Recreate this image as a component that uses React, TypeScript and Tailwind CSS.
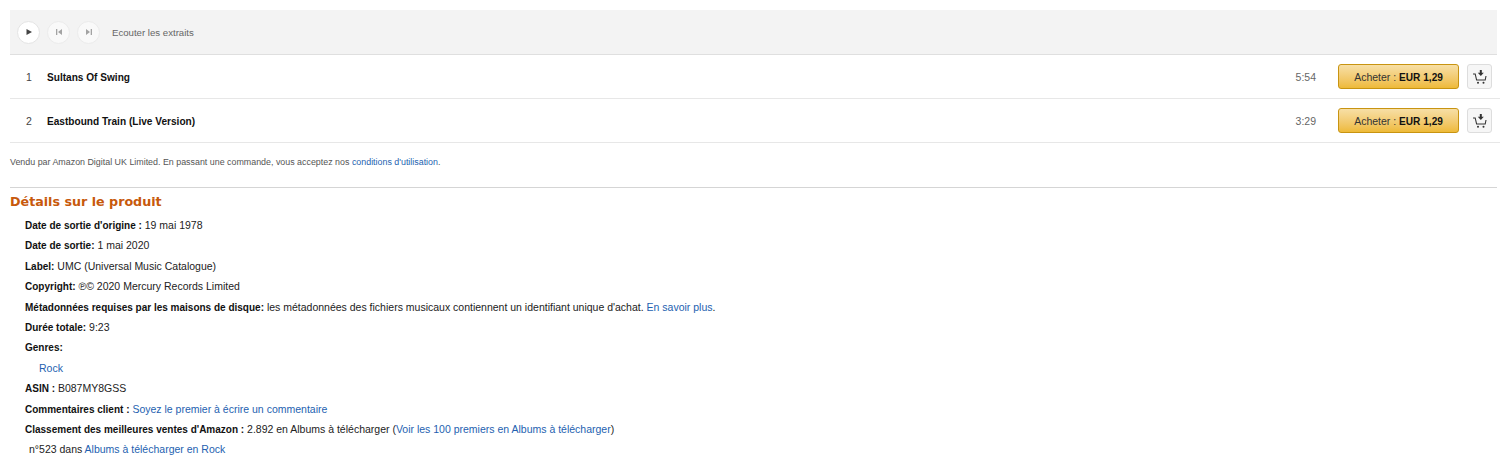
function Cart() {
  return (
    <svg width="16" height="16" viewBox="0 0 16 16" fill="none">
      <path d="M8.800 1v3" stroke="#333" strokeWidth="2" />
      <path d="M5.800 3.800h6L8.800 7z" fill="#333" />
      <path d="M1 5h2.200l1.400 6h8.600l.8-4" stroke="#333" strokeWidth="1.100" />
      <circle cx="6" cy="13.800" r="1" fill="#333" />
      <circle cx="11.500" cy="13.800" r="1" fill="#333" />
    </svg>
  );
}

function Round({ children, dim }: { children: React.ReactNode; dim?: boolean }) {
  return (
    <div className={`w-[23px] h-[23px] rounded-full bg-white border border-[#e4e4e4] flex items-center justify-center ${dim ? "opacity-50" : ""}`}>
      {children}
    </div>
  );
}

function Track({ n, title, time }: { n: string; title: string; time: string }) {
  return (
    <div className="h-11 flex items-center border-b border-[#e7e7e7]">
      <span className="w-[37px] pl-4 pt-[2px] text-[#444]">{n}</span>
      <span className="font-bold text-[#111] flex-1 pt-[2px] text-[10.100px]">{title}</span>
      <span className="text-[#666] pt-[2px] mr-[22px]">{time}</span>
      <button className="w-[121px] h-[25px] rounded-[3px] border border-[#c89411] bg-gradient-to-b from-[#f7dfa5] to-[#eeba37] pt-[2px] text-[#333] mr-2 text-[10.500px]">
        Acheter : <b className="text-[#111] text-[10.100px]">EUR 1,29</b>
      </button>
      <div className="w-[25px] h-[25px] rounded-[3px] border border-[#ddd] bg-[#f6f6f6] flex items-center justify-center mr-[8px]">
        <Cart />
      </div>
    </div>
  );
}

function Row({ children, className = "" }: { children: React.ReactNode; className?: string }) {
  return <div className={`h-[20.4px] leading-[20.4px] pl-[15px] whitespace-nowrap ${className}`}>{children}</div>;
}

const L = ({ children }: { children: React.ReactNode }) => <a className="text-[#245fb0]">{children}</a>;
const B = ({ children }: { children: React.ReactNode }) => <b className="text-[10px] text-[#111]">{children}</b>;

export default function App() {
  return (
    <div className="bg-white w-[1500px] h-[466px] overflow-hidden pt-[10px] pl-[10px] text-[10.500px] text-[#222] font-['Liberation_Sans',sans-serif]">
      <div className="h-[45px] flex items-center bg-[#f3f3f3] border-b border-[#dfdfdf] pl-[7px] gap-[7px] mr-[3px]">
        <Round>
          <svg width="8" height="8" viewBox="0 0 8 8"><path d="M1.500 1v6L7 4z" fill="#444" /></svg>
        </Round>
        <Round dim>
          <svg width="8" height="8" viewBox="0 0 8 8"><path d="M1 1h1.300v6H1zM7 1v6L3 4z" fill="#555" /></svg>
        </Round>
        <Round dim>
          <svg width="8" height="8" viewBox="0 0 8 8"><path d="M7 1H5.700v6H7zM1 1v6l4-3z" fill="#555" /></svg>
        </Round>
        <span className="text-[9.650px] text-[#666] ml-[5px] pt-[2px]">Ecouter les extraits</span>
      </div>
      <Track n="1" title="Sultans Of Swing" time="5:54" />
      <Track n="2" title="Eastbound Train (Live Version)" time="3:29" />
      <div className="h-[45px] pt-[13px] text-[8.900px] text-[#555] border-b border-[#d5d5d5] mr-[3px]">
        Vendu par Amazon Digital UK Limited. En passant une commande, vous acceptez nos <L>conditions d'utilisation</L>.
      </div>
      <h2 className="text-[12.700px] font-bold text-[#c7590c] mt-[4px] mb-[3px] leading-[20px] font-['DejaVu_Sans',sans-serif]">Détails sur le produit</h2>
      <Row><B>Date de sortie d'origine :</B> 19 mai 1978</Row>
      <Row><B>Date de sortie:</B> 1 mai 2020</Row>
      <Row><B>Label:</B> UMC (Universal Music Catalogue)</Row>
      <Row><B>Copyright:</B> ℗© 2020 Mercury Records Limited</Row>
      <Row><B>Métadonnées requises par les maisons de disque:</B> les métadonnées des fichiers musicaux contiennent un identifiant unique d'achat. <L>En savoir plus</L>.</Row>
      <Row><B>Durée totale:</B> 9:23</Row>
      <Row><B>Genres:</B></Row>
      <Row className="pl-[29px]"><L>Rock</L></Row>
      <Row><B>ASIN :</B> B087MY8GSS</Row>
      <Row><B>Commentaires client :</B> <L>Soyez le premier à écrire un commentaire</L></Row>
      <Row><B>Classement des meilleures ventes d'Amazon :</B> 2.892 en Albums à télécharger (<L>Voir les 100 premiers en Albums à télécharger</L>)</Row>
      <Row className="pl-[19px]">n°523 dans <L>Albums à télécharger en Rock</L></Row>
    </div>
  );
}
